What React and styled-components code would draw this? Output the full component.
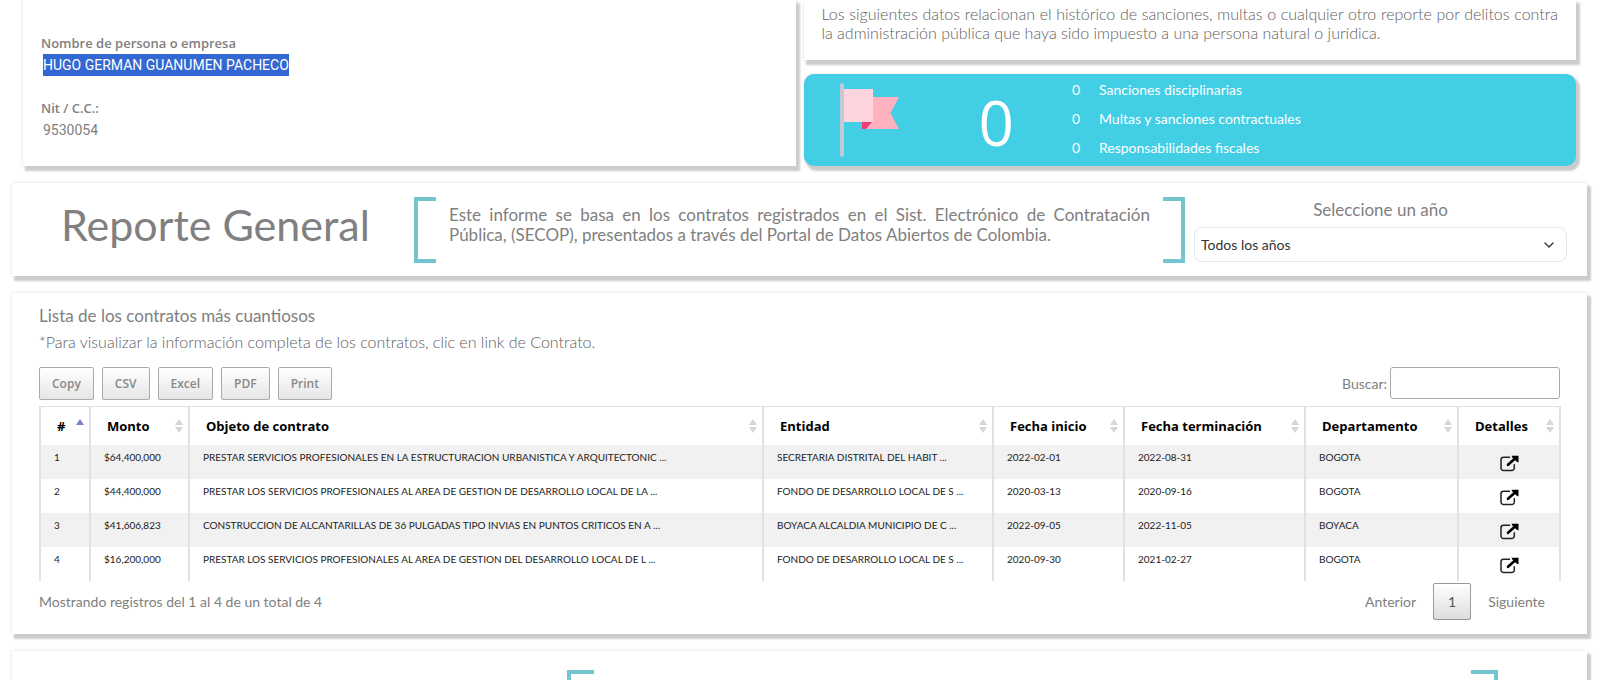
import React, { useState } from 'react'
import styled, { createGlobalStyle } from 'styled-components'
import { FiChevronDown } from 'react-icons/fi'

const exportButtons = ['Copy', 'CSV', 'Excel', 'PDF', 'Print']

const columns = [
  { id: 'num', label: '#', width: '50px', sorted: true },
  { id: 'amount', label: 'Monto', width: '99px' },
  { id: 'subject', label: 'Objeto de contrato' },
  { id: 'entity', label: 'Entidad', width: '230px' },
  { id: 'start', label: 'Fecha inicio', width: '131px' },
  { id: 'end', label: 'Fecha terminación', width: '181px' },
  { id: 'department', label: 'Departamento', width: '153px' },
  { id: 'details', label: 'Detalles', width: '102px' },
]

const contracts = [
  {
    num: 1,
    amount: '$64,400,000',
    subject:
      'PRESTAR SERVICIOS PROFESIONALES EN LA ESTRUCTURACION URBANISTICA Y ARQUITECTONIC ...',
    entity: 'SECRETARIA DISTRITAL DEL HABIT ...',
    start: '2022-02-01',
    end: '2022-08-31',
    department: 'BOGOTA',
  },
  {
    num: 2,
    amount: '$44,400,000',
    subject:
      'PRESTAR LOS SERVICIOS PROFESIONALES AL AREA DE GESTION DE DESARROLLO LOCAL DE LA ...',
    entity: 'FONDO DE DESARROLLO LOCAL DE S ...',
    start: '2020-03-13',
    end: '2020-09-16',
    department: 'BOGOTA',
  },
  {
    num: 3,
    amount: '$41,606,823',
    subject:
      'CONSTRUCCION DE ALCANTARILLAS DE 36 PULGADAS TIPO INVIAS EN PUNTOS CRITICOS EN A ...',
    entity: 'BOYACA ALCALDIA MUNICIPIO DE C ...',
    start: '2022-09-05',
    end: '2022-11-05',
    department: 'BOYACA',
  },
  {
    num: 4,
    amount: '$16,200,000',
    subject:
      'PRESTAR LOS SERVICIOS PROFESIONALES AL AREA DE GESTION DEL DESARROLLO LOCAL DE L ...',
    entity: 'FONDO DE DESARROLLO LOCAL DE S ...',
    start: '2020-09-30',
    end: '2021-02-27',
    department: 'BOGOTA',
  },
]

const sanctions = [
  { id: 1, count: 0, label: 'Sanciones disciplinarias' },
  { id: 2, count: 0, label: 'Multas y sanciones contractuales' },
  { id: 3, count: 0, label: 'Responsabilidades fiscales' },
]

const FlagIcon = () => (
  <svg width='60' height='74' viewBox='0 0 60 74' aria-hidden='true'>
    <path d='M26 14H59L50.500 30L59 46H26Z' fill='#ffb1bf' />
    <path d='M4 6H33V39H4Z' fill='#ffd5dd' />
    <path d='M22 39H32L26 46H22Z' fill='#f03e74' />
    <rect x='0' y='0' width='4' height='74' rx='2' fill='#c5c9d3' />
  </svg>
)

const LinkIcon = () => (
  <svg width='19' height='17' viewBox='0 0 19 17' aria-hidden='true'>
    <path
      d='M9.500 2.200H3.500A2.500 2.500 0 0 0 1 4.700V13A2.500 2.500 0 0 0 3.500 15.500H11.800A2.500 2.500 0 0 0 14.300 13V9.800'
      fill='none'
      stroke='#222'
      strokeWidth='1.500'
      strokeLinecap='round'
    />
    <path d='M8 9.800L14.500 4' stroke='#000' strokeWidth='2.600' strokeLinecap='round' />
    <path d='M11.500 0.800H18.500V7.500L16.500 6.500L12.500 2.800Z' fill='#000' />
  </svg>
)

const SortIcon = ({ sorted }) => (
  <svg width='8' height='14' viewBox='0 0 8 14' aria-hidden='true'>
    <path d='M4 0L8 6H0Z' fill={sorted ? '#7d7fc4' : '#d6d6d6'} />
    {!sorted && <path d='M0 8H8L4 14Z' fill='#d6d6d6' />}
  </svg>
)

const App = () => {
  const [year, setYear] = useState('all')
  const [search, setSearch] = useState('')

  const rows = contracts.filter((item) =>
    Object.values(item).join(' ').toLowerCase().includes(search.toLowerCase())
  )

  return (
    <>
      <GlobalStyle />
      <Page>
        <TopRow>
          <PersonCard>
            <dt>Nombre de persona o empresa</dt>
            <dd>
              <mark>HUGO GERMAN GUANUMEN PACHECO</mark>
            </dd>
            <dt>Nit / C.C.:</dt>
            <dd>9530054</dd>
          </PersonCard>
          <SanctionsColumn>
            <NoteCard>
              <p>
                Los siguientes datos relacionan el histórico de sanciones, multas
                o cualquier otro reporte por delitos contra la administración
                pública que haya sido impuesto a una persona natural o jurídica.
              </p>
            </NoteCard>
            <SanctionsCard>
              <FlagIcon />
              <Total>0</Total>
              <SanctionList>
                {sanctions.map((item) => (
                  <li key={item.id}>
                    <span>{item.count}</span>
                    {item.label}
                  </li>
                ))}
              </SanctionList>
            </SanctionsCard>
          </SanctionsColumn>
        </TopRow>

        {/* General report */}
        <ReportCard>
          <h1>Reporte General</h1>
          <Bracket $side='left' />
          <p>
            Este informe se basa en los contratos registrados en el Sist.
            Electrónico de Contratación Pública, (SECOP), presentados a través
            del Portal de Datos Abiertos de Colombia.
          </p>
          <Bracket $side='right' />
          <YearField>
            <label htmlFor='year'>Seleccione un año</label>
            <SelectHolder>
              <select
                id='year'
                value={year}
                onChange={(e) => setYear(e.target.value)}
              >
                <option value='all'>Todos los años</option>
                <option value='2022'>2022</option>
                <option value='2020'>2020</option>
              </select>
              <FiChevronDown />
            </SelectHolder>
          </YearField>
        </ReportCard>

        {/* Contracts table */}
        <ContractsCard>
          <h2>Lista de los contratos más cuantiosos</h2>
          <p>
            *Para visualizar la información completa de los contratos, clic en
            link de Contrato.
          </p>
          <Toolbar>
            <ButtonGroup>
              {exportButtons.map((name) => (
                <ExportButton key={name} type='button'>
                  {name}
                </ExportButton>
              ))}
            </ButtonGroup>
            <SearchLabel>
              Buscar:
              <input
                type='search'
                value={search}
                onChange={(e) => setSearch(e.target.value)}
              />
            </SearchLabel>
          </Toolbar>
          <Table>
            <colgroup>
              {columns.map((col) => (
                <Col key={col.id} $width={col.width} />
              ))}
            </colgroup>
            <thead>
              <tr>
                {columns.map((col) => (
                  <th key={col.id} scope='col'>
                    <HeadCell>
                      {col.label}
                      <SortIcon sorted={col.sorted} />
                    </HeadCell>
                  </th>
                ))}
              </tr>
            </thead>
            <tbody>
              {rows.map((item) => (
                <tr key={item.num}>
                  <td>{item.num}</td>
                  <td>{item.amount}</td>
                  <td>{item.subject}</td>
                  <td>{item.entity}</td>
                  <td>{item.start}</td>
                  <td>{item.end}</td>
                  <td>{item.department}</td>
                  <LinkCell>
                    <a href='#contrato' aria-label='Ver contrato'>
                      <LinkIcon />
                    </a>
                  </LinkCell>
                </tr>
              ))}
            </tbody>
          </Table>
          <TableFooter>
            <span>Mostrando registros del 1 al 4 de un total de 4</span>
            <Pagination>
              <PageButton type='button'>Anterior</PageButton>
              <PageButton type='button' $current>
                1
              </PageButton>
              <PageButton type='button'>Siguiente</PageButton>
            </Pagination>
          </TableFooter>
        </ContractsCard>

        <NextCard>
          <Bracket $side='left' $wide />
          <Bracket $side='right' $wide />
        </NextCard>
      </Page>
    </>
  )
}

const GlobalStyle = createGlobalStyle`
  * {
    box-sizing: border-box;
  }
  body {
    margin: 0;
    background: #fff;
    color: #808080;
    font-family: Lato, 'Open Sans', sans-serif;
    font-size: 14px;
  }
  h1, h2, p, dl, dd, ul {
    margin: 0;
    padding: 0;
    font-weight: 400;
  }
  button, input, select {
    font-family: inherit;
  }
`

const Page = styled.main`
  display: flex;
  flex-direction: column;
  gap: 17px;
  height: 100vh;
  padding: 0 13px 0 12px;
  overflow: hidden;
`

const Card = styled.section`
  flex-shrink: 0;
  background: #fff;
  box-shadow: 3px 4px 2px 1px #ccc, 0 0 3px #ddd;
`

const TopRow = styled.div`
  display: grid;
  grid-template-columns: 1fr 1fr;
  gap: 8px;
  flex-shrink: 0;
  padding: 0 11px;
`

const PersonCard = styled(Card).attrs({ as: 'dl' })`
  padding: 32px 18px 0;
  font-family: Roboto, sans-serif;
  line-height: 22px;

  dt {
    font-family: 'Open Sans', sans-serif;
    font-size: 13px;
    font-weight: 600;
  }
  dd {
    padding-left: 2px;
    margin-bottom: 21px;
  }
  mark {
    display: inline-block;
    background: #3367d1;
    color: #fff;
  }
`

const SanctionsColumn = styled.div`
  display: flex;
  flex-direction: column;
  gap: 14px;
`

const NoteCard = styled(Card)`
  padding: 4px 18px 18px;
  color: #606060;
  font-size: 16px;
  line-height: 19px;
  text-align: justify;

  p {
    font-weight: 300;
  }
`

const SanctionsCard = styled(Card)`
  display: flex;
  align-items: center;
  height: 92px;
  padding-left: 36px;
  border-radius: 10px;
  background: #42cee4;
  color: #fff;
`

const Total = styled.strong`
  margin: 0 58px 0 79px;
  padding-top: 4px;
  font-family: 'Open Sans', sans-serif;
  font-size: 62px;
  font-weight: 400;
  line-height: 74px;
`

const SanctionList = styled.ul`
  padding-bottom: 3px;
  list-style: none;
  line-height: 29px;

  span {
    display: inline-block;
    width: 27px;
  }
`

const ReportCard = styled(Card)`
  display: flex;
  align-items: flex-start;
  padding: 14px 20px 13px 49px;

  h1 {
    width: 353px;
    font-size: 43px;
    line-height: 56px;
    white-space: nowrap;
  }
  p {
    flex: 1;
    padding: 8px 13px 0;
    font-size: 17px;
    line-height: 20px;
    text-align: justify;
  }
`

const Bracket = styled.span`
  width: ${({ $wide }) => ($wide ? '27px' : '22px')};
  height: 66px;
  border: 4px solid #75c5cf;
  border-${({ $side }) => ($side === 'left' ? 'right' : 'left')}: 0;
`

const YearField = styled.div`
  display: flex;
  flex-direction: column;
  width: 373px;
  margin-left: 9px;

  label {
    font-size: 17px;
    line-height: 26px;
    text-align: center;
  }
`

const SelectHolder = styled.div`
  position: relative;
  margin-top: 4px;

  select {
    width: 100%;
    height: 35px;
    padding: 0 6px;
    appearance: none;
    border: 1px solid #e3e6ea;
    border-radius: 8px;
    background: #fff;
    color: #333;
    font-size: 14px;
  }
  svg {
    position: absolute;
    top: 10px;
    right: 10px;
    width: 16px;
    height: 16px;
    color: #333;
    pointer-events: none;
  }
`

const ContractsCard = styled(Card)`
  padding: 13px 27px 14px;

  h2 {
    font-size: 17px;
    line-height: 20px;
  }
  p {
    padding-top: 5px;
    color: #606060;
    font-size: 16px;
    font-weight: 300;
    line-height: 22px;
  }
`

const Toolbar = styled.div`
  display: flex;
  justify-content: space-between;
  padding: 14px 0 6px;
`

const ButtonGroup = styled.div`
  display: flex;
  gap: 8px;
`

const ExportButton = styled.button`
  height: 33px;
  padding: 0 12px;
  border: 1px solid #aaa;
  border-radius: 2px;
  background: linear-gradient(#fff, #e6e6e6);
  color: #888;
  font-family: 'Open Sans', sans-serif;
  font-size: 12px;
  font-weight: 600;
`

const SearchLabel = styled.label`
  display: flex;
  align-items: center;
  gap: 3px;
  height: 32px;

  input {
    width: 170px;
    height: 32px;
    padding: 4px;
    border: 1px solid #aaa;
    border-radius: 3px;
    background: #fff;
  }
`

const Table = styled.table`
  width: calc(100% + 1px);
  table-layout: fixed;
  border-collapse: collapse;
  color: #222;
  font-size: 10px;

  th,
  td {
    border: 0 solid #dee2e6;
    border-width: 0 2px;
    text-align: left;
    white-space: nowrap;
  }
  th {
    height: 38px;
    padding: 0 5px 0 16px;
    border-top-width: 1px;
    color: #000;
    font-family: 'Open Sans', sans-serif;
    font-size: 13px;
    font-weight: 700;
  }
  td {
    height: 34px;
    padding: 4px 13px 0;
    line-height: 16px;
    vertical-align: top;
  }
  tbody tr:nth-child(odd) {
    background: #f1f1f1;
  }
`

const Col = styled.col`
  width: ${({ $width }) => $width || 'auto'};
`

const HeadCell = styled.div`
  display: flex;
  align-items: center;
  justify-content: space-between;

  svg {
    flex-shrink: 0;
  }
`

const LinkCell = styled.td`
  && {
    padding: 10px 0 0;
    text-align: center;
  }
  a {
    display: inline-block;
  }
`

const TableFooter = styled.div`
  display: flex;
  align-items: center;
  justify-content: space-between;
  padding-top: 2px;
`

const Pagination = styled.nav`
  display: flex;
  gap: 2px;
`

const PageButton = styled.button`
  height: 37px;
  padding: 0 14px;
  border: 1px solid ${({ $current }) => ($current ? '#979797' : 'transparent')};
  border-radius: 2px;
  background: ${({ $current }) =>
    $current ? 'linear-gradient(#fff, #dcdcdc)' : 'transparent'};
  color: ${({ $current }) => ($current ? '#555' : '#808080')};
  font-size: 14px;
`

const NextCard = styled(Card)`
  display: flex;
  justify-content: space-between;
  padding: 19px 89px 13px 555px;
`

export default App
